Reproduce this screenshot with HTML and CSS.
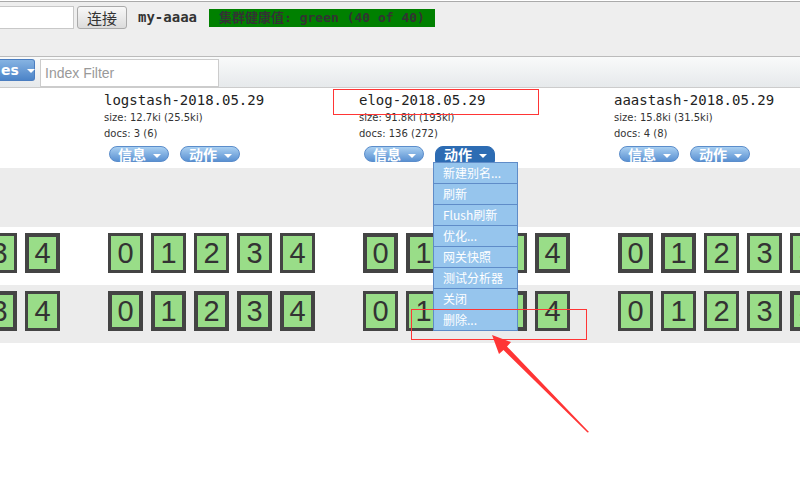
FILE: index.html
```html
<!DOCTYPE html>
<html>
<head>
    <meta charset="utf-8">
    <link rel="stylesheet" href="styles.css">
</head>
<body>
    <div class="header">
        <input type="text" class="uri-input" value="http://localhost:9200/">
        <button class="connect">连接</button>
        <span class="cluster-name">my-aaaa</span>
        <span class="health">集群健康值: green (40 of 40)</span>
    </div>

    <div class="toolbar">
        <button class="select-button">es <span class="caret"></span></button>
        <input type="text" class="filter" placeholder="Index Filter">
    </div>

    <div class="overview">
        <div class="strip names">
            <div class="col">
                <div class="index-name">kibana</div>
                <div class="meta">size: 9.2ki (18.4ki)</div>
                <div class="meta">docs: 2 (4)</div>
                <div class="actions">
                    <span class="pill">信息 <span class="caret"></span></span>
                    <span class="pill">动作 <span class="caret"></span></span>
                </div>
            </div>
            <div class="col">
                <div class="index-name">logstash-2018.05.29</div>
                <div class="meta">size: 12.7ki (25.5ki)</div>
                <div class="meta">docs: 3 (6)</div>
                <div class="actions">
                    <span class="pill">信息 <span class="caret"></span></span>
                    <span class="pill">动作 <span class="caret"></span></span>
                </div>
            </div>
            <div class="col">
                <div class="index-name">elog-2018.05.29</div>
                <div class="meta">size: 91.8ki (193ki)</div>
                <div class="meta">docs: 136 (272)</div>
                <div class="actions">
                    <span class="pill">信息 <span class="caret"></span></span>
                    <span class="pill active">动作 <span class="caret"></span></span>
                </div>
            </div>
            <div class="col">
                <div class="index-name">aaastash-2018.05.29</div>
                <div class="meta">size: 15.8ki (31.5ki)</div>
                <div class="meta">docs: 4 (8)</div>
                <div class="actions">
                    <span class="pill">信息 <span class="caret"></span></span>
                    <span class="pill">动作 <span class="caret"></span></span>
                </div>
            </div>
        </div>

        <div class="strip band"></div>

        <div class="strip shards">
            <div class="col">
                <div class="shard-list">
                    <span class="shard">0</span><span class="shard">1</span><span class="shard">2</span><span class="shard">3</span><span class="shard primary">4</span>
                </div>
            </div>
            <div class="col">
                <div class="shard-list">
                    <span class="shard">0</span><span class="shard">1</span><span class="shard">2</span><span class="shard">3</span><span class="shard">4</span>
                </div>
            </div>
            <div class="col">
                <div class="shard-list">
                    <span class="shard primary">0</span><span class="shard primary">1</span><span class="shard">2</span><span class="shard">3</span><span class="shard primary">4</span>
                </div>
            </div>
            <div class="col">
                <div class="shard-list">
                    <span class="shard primary">0</span><span class="shard primary">1</span><span class="shard">2</span><span class="shard">3</span><span class="shard">4</span>
                </div>
            </div>
        </div>

        <div class="strip shards alt">
            <div class="col">
                <div class="shard-list">
                    <span class="shard primary">0</span><span class="shard primary">1</span><span class="shard primary">2</span><span class="shard primary">3</span><span class="shard">4</span>
                </div>
            </div>
            <div class="col">
                <div class="shard-list">
                    <span class="shard primary">0</span><span class="shard primary">1</span><span class="shard primary">2</span><span class="shard primary">3</span><span class="shard primary">4</span>
                </div>
            </div>
            <div class="col">
                <div class="shard-list">
                    <span class="shard">0</span><span class="shard">1</span><span class="shard primary">2</span><span class="shard primary">3</span><span class="shard">4</span>
                </div>
            </div>
            <div class="col">
                <div class="shard-list">
                    <span class="shard">0</span><span class="shard">1</span><span class="shard">2</span><span class="shard">3</span><span class="shard primary">4</span>
                </div>
            </div>
        </div>
    </div>

    <!-- menu opened from the elog "动作" button -->
    <ul class="action-menu">
        <li>新建别名...</li>
        <li>刷新</li>
        <li>Flush刷新</li>
        <li>优化...</li>
        <li>网关快照</li>
        <li>测试分析器</li>
        <li>关闭</li>
        <li>删除...</li>
    </ul>

    <!-- screenshot annotations -->
    <div class="mark mark-name"></div>
    <div class="mark mark-delete"></div>
    <svg class="arrow" width="800" height="481" viewBox="0 0 800 481">
        <polygon points="492,335 511,342 507,346.5 589,432 587.5,432.5 503.5,350 499,354" fill="#ff3535"/>
    </svg>
</body>
</html>
```

FILE: styles.css
```css
:root {
    --text: #333;
    --band: #ececec;
    --shard-fill: #99dd88;
    --shard-border: #444;
    --pill-top: #a9cff1;
    --pill-bottom: #5a91d2;
    --pill-border: #5b8dcb;
    --menu-bg: #96c5ed;
    --menu-line: #5f8cc8;
    --mark: #ff3535;
}

body {
    margin: 0;
    background: #fff;
    color: var(--text);
    font-family: "DejaVu Sans", "Noto Sans CJK SC", sans-serif;
    height: 481px;
    overflow: hidden;
    position: relative;
}

/* header */

.header {
    margin-top: 1px;
    height: 50px;
    padding-top: 4px;
    background: #eee;
    border-top: 1px solid #aaa;
    border-bottom: 1px solid #bbb;
    display: flex;
    align-items: flex-start;
}

.uri-input {
    width: 150px;
    height: 23px;
    margin: 0 0 0 -76px;
    padding: 0 4px;
    box-sizing: border-box;
    border: 1px solid #c8c8c8;
    background: #fff;
    color: #fff;
    font-size: 13px;
}

.connect {
    margin-left: 3px;
    width: 50px;
    height: 23px;
    padding: 0;
    border: 1px solid #aaa;
    border-radius: 3px;
    background: linear-gradient(#f8f8f8, #dcdcdc);
    color: var(--text);
    font-family: "Noto Sans CJK SC", sans-serif;
    font-size: 15px;
    line-height: 20px;
}

.cluster-name {
    margin-left: 11px;
    font-family: "DejaVu Sans Mono", monospace;
    font-weight: bold;
    font-size: 14px;
    line-height: 23px;
}

.health {
    margin: 3px 0 0 12px;
    height: 18px;
    padding: 0 10px;
    background: #008000;
    color: #333;
    font-family: "DejaVu Sans Mono", "Noto Sans CJK SC", monospace;
    font-weight: bold;
    font-size: 13px;
    line-height: 18px;
    white-space: nowrap;
}

/* toolbar */

.toolbar {
    height: 28px;
    padding-top: 2px;
    background: linear-gradient(#f9fafa, #e6e9eb);
    border-bottom: 1px solid #ccc;
    display: flex;
    align-items: flex-start;
}

.select-button {
    width: 35px;
    height: 22px;
    margin: 0;
    padding: 0 0 0 1px;
    box-sizing: border-box;
    border: 1px solid #4a7dc0;
    border-left: none;
    border-radius: 0 3px 3px 0;
    background: linear-gradient(#86b3e2, #4c84c8);
    color: #fff;
    font-family: "DejaVu Sans", sans-serif;
    font-weight: bold;
    font-size: 14px;
    line-height: 20px;
    text-align: left;
    white-space: nowrap;
}

.caret {
    display: inline-block;
    width: 0;
    height: 0;
    border-left: 4px solid transparent;
    border-right: 4px solid transparent;
    border-top: 4px solid #fff;
    vertical-align: middle;
    margin-left: 3px;
}

.filter {
    margin: 0 0 0 5px;
    width: 179px;
    height: 28px;
    padding: 0 4px;
    box-sizing: border-box;
    border: 1px solid #ccc;
    background: #fff;
    font-family: "Liberation Sans", sans-serif;
    font-size: 14px;
}

.filter::placeholder {
    color: #999;
}

/* index overview */

.strip {
    display: flex;
    margin-left: -151px;
}

.col {
    flex: 0 0 255px;
}

.names {
    height: 78px;
    padding-top: 2px;
}

.index-name {
    font-family: "DejaVu Sans Mono", monospace;
    font-size: 14px;
    line-height: 20px;
    color: #222;
    white-space: nowrap;
}

.meta {
    font-family: "DejaVu Sans", sans-serif;
    font-size: 10px;
    line-height: 16px;
    white-space: nowrap;
}

.actions {
    display: flex;
    gap: 11px;
    margin: 4px 0 0 5px;
}

.pill {
    width: 60px;
    height: 16px;
    box-sizing: border-box;
    padding-left: 8px;
    border: 1px solid var(--pill-border);
    border-radius: 8px;
    background: linear-gradient(var(--pill-top), var(--pill-bottom));
    color: #fff;
    font-family: "Noto Sans CJK SC", sans-serif;
    font-weight: bold;
    font-size: 14px;
    line-height: 14px;
    white-space: nowrap;
}

.pill .caret {
    margin-left: 4px;
}

.pill.active {
    background: #2d6cb3;
    border-color: #2d6cb3;
    border-radius: 8px 8px 0 0;
}

.band {
    height: 59px;
    background: var(--band);
}

.shards {
    height: 58px;
    padding-top: 6px;
    box-sizing: border-box;
}

.shards.alt {
    background: var(--band);
}

.shard-list {
    display: flex;
    gap: 8px;
    margin-left: 4px;
}

.shard {
    width: 35px;
    height: 40px;
    box-sizing: border-box;
    border: 3px solid var(--shard-border);
    background: var(--shard-fill);
    font-family: "Liberation Sans", sans-serif;
    font-size: 29px;
    line-height: 34px;
    text-align: center;
    color: #333;
}

.shard.primary {
    border-width: 4px;
    line-height: 32px;
}

/* dropdown */

.action-menu {
    position: absolute;
    left: 433px;
    top: 162px;
    width: 85px;
    margin: 0;
    padding: 0;
    box-sizing: border-box;
    list-style: none;
    background: var(--menu-bg);
    border: 1px solid var(--menu-line);
    border-top: none;
}

.action-menu li {
    height: 20px;
    padding-left: 9px;
    border-top: 1px solid var(--menu-line);
    color: #fff;
    font-family: "Noto Sans CJK SC", sans-serif;
    font-size: 12px;
    line-height: 20px;
    white-space: nowrap;
}

/* annotations */

.mark {
    position: absolute;
    border: 1px solid var(--mark);
    box-sizing: border-box;
}

.mark-name {
    left: 333px;
    top: 89px;
    width: 206px;
    height: 26px;
}

.mark-delete {
    left: 411px;
    top: 309px;
    width: 176px;
    height: 31px;
}

.arrow {
    position: absolute;
    left: 0;
    top: 0;
}
```
